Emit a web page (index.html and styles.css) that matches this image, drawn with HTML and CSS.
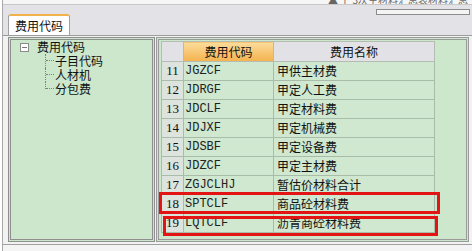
FILE: index.html
```html
<!DOCTYPE html>
<html lang="zh-CN">
<head>
    <meta charset="UTF-8">
    <meta name="viewport" content="width=device-width, initial-scale=1.0">
    <title>费用代码</title>
    <link rel="stylesheet" href="styles.css">
</head>
<body>

    <div class="window">
        <div class="topbar">
            <span class="topbar-text">▲ 上 3次主材料汇总表材料汇总</span>
        </div>
        <div class="tabbar">
            <div class="tab">费用代码</div>
            <div class="mini-scroll"></div>
        </div>

        <div class="content">
            <div class="tree-panel">
                <div class="tree-root">
                    <span class="minus-box"></span>
                    <span class="node-text">费用代码</span>
                </div>
                <div class="tree-children">
                    <div class="child"><span class="elbow"><span class="elbow-h"></span></span><span class="node-text">子目代码</span></div>
                    <div class="child"><span class="elbow"><span class="elbow-h"></span></span><span class="node-text">人材机</span></div>
                    <div class="child last"><span class="elbow"><span class="elbow-h"></span></span><span class="node-text">分包费</span></div>
                </div>
            </div>

            <div class="grid-panel">
                <table class="grid">
                    <colgroup>
                        <col class="col-num">
                        <col class="col-code">
                        <col class="col-name">
                    </colgroup>
                    <thead>
                        <tr>
                            <th class="num"></th>
                            <th class="code-head">费用代码</th>
                            <th>费用名称</th>
                        </tr>
                    </thead>
                    <tbody>
                        <tr><td class="num">11</td><td class="code">JGZCF</td><td>甲供主材费</td></tr>
                        <tr><td class="num">12</td><td class="code">JDRGF</td><td>甲定人工费</td></tr>
                        <tr><td class="num">13</td><td class="code">JDCLF</td><td>甲定材料费</td></tr>
                        <tr><td class="num">14</td><td class="code">JDJXF</td><td>甲定机械费</td></tr>
                        <tr><td class="num">15</td><td class="code">JDSBF</td><td>甲定设备费</td></tr>
                        <tr><td class="num">16</td><td class="code">JDZCF</td><td>甲定主材费</td></tr>
                        <tr><td class="num">17</td><td class="code">ZGJCLHJ</td><td>暂估价材料合计</td></tr>
                        <tr><td class="num">18</td><td class="code">SPTCLF</td><td>商品砼材料费</td></tr>
                        <tr><td class="num">19</td><td class="code">LQTCLF</td><td>沥青商砼材料费</td></tr>
                    </tbody>
                </table>
                <div class="mark mark-18"></div>
                <div class="mark mark-19"></div>
            </div>
        </div>
        <div class="bottombar"></div>
    </div>

</body>
</html>
```

FILE: styles.css
```css
body {
    margin: 0;
    background-color: #ffffff;
    font-family: "Noto Sans CJK SC", "Noto Sans", sans-serif;
    font-size: 12px;
    color: #111;
}
.window {
    margin-left: 2px;
    border-left: 1px solid #a8a8a8;
    height: 251px;
    box-sizing: border-box;
}
.topbar {
    height: 5px;
    border-bottom: 1px solid #c8c8c8;
    box-sizing: border-box;
    overflow: hidden;
    text-align: right;
    background-color: #f6f6f6;
}
.topbar-text {
    display: inline-block;
    font-size: 10px;
    line-height: 10px;
    margin-top: -5px;
    margin-right: 4px;
    color: #666;
    vertical-align: top;
}
.tabbar {
    height: 30px;
    background-color: #e3e3e7;
    display: flex;
    align-items: flex-end;
    justify-content: space-between;
    padding-left: 5px;
    padding-right: 2px;
}
.tab {
    width: 62px;
    height: 21px;
    box-sizing: border-box;
    background-color: #ffffff;
    border: 1px solid #a0a0a0;
    border-top: 2px solid #f0b24c;
    border-bottom: none;
    border-radius: 3px 3px 0 0;
    text-align: center;
    line-height: 19px;
    font-size: 12px;
}
.mini-scroll {
    align-self: flex-start;
    margin-top: 4px;
    width: 92px;
    height: 4px;
    border: 1px solid #8c8c8c;
    background-color: #f4f4f4;
}
.content {
    display: flex;
    gap: 1px;
    height: 209px;
    box-sizing: border-box;
    border-top: 1px solid #9c9c9c;
    padding: 1px 3px 2px 5px;
    background-color: #f2f2f2;
}
.tree-panel {
    width: 147px;
    box-sizing: border-box;
    border: 3px double #8e8e8e;
    background-color: #cce7cc;
}
.tree-root {
    display: flex;
    align-items: center;
    height: 14px;
}
.minus-box {
    width: 9px;
    height: 9px;
    box-sizing: border-box;
    margin-left: 9px;
    border: 1px solid #8a8a8a;
    background: linear-gradient(#7a7a7a, #7a7a7a) center / 5px 1px no-repeat, #ffffff;
}
.node-text {
    line-height: 14px;
    white-space: nowrap;
}
.tree-root .node-text {
    margin-left: 8px;
}
.tree-children {
    margin-left: 34px;
}
.child {
    display: flex;
    height: 14px;
}
.elbow {
    width: 9px;
    height: 14px;
    box-sizing: border-box;
    border-left: 1px dotted #808080;
    margin-right: 1px;
}
.child.last .elbow {
    height: 7px;
}
.elbow-h {
    display: block;
    height: 7px;
    box-sizing: border-box;
    border-bottom: 1px dotted #808080;
}
.grid-panel {
    flex: 1;
    position: relative;
    box-sizing: border-box;
    border: 3px double #9a9a9a;
    background-color: #cce7cc;
    padding: 1px 0 0 2px;
}
.grid {
    border-collapse: collapse;
    table-layout: fixed;
    width: 273px;
}
.col-num { width: 22px; }
.col-code { width: 90px; }
.col-name { width: 161px; }
.grid th {
    height: 19px;
    line-height: 17px;
    font-weight: normal;
    background-color: #e2e2e6;
    border: 1px solid #b4bcb4;
    padding: 0;
    text-align: center;
}
.grid th.code-head {
    background: linear-gradient(#fbdc9c, #f4b24e);
}
.grid td {
    height: 18px;
    line-height: 16px;
    padding: 0 0 0 3px;
    border: 1px solid #a9bba9;
    background-color: #cfe8cf;
    white-space: nowrap;
    overflow: hidden;
}
.grid td.num {
    background-color: #dde4dd;
    text-align: center;
    padding: 0;
    font-family: "Liberation Serif", serif;
    font-size: 13px;
}
.grid td.code {
    padding-left: 1px;
    font-family: "Liberation Mono", monospace;
    font-size: 12px;
    color: #222;
}
.mark {
    position: absolute;
    box-sizing: border-box;
    border: 3px solid #e21414;
}
.mark-18 {
    left: 0;
    top: 152px;
    width: 281px;
    height: 22px;
}
.mark-19 {
    left: 4px;
    top: 176px;
    width: 275px;
    height: 20px;
}
.bottombar {
    height: 6px;
    border-top: 1px solid #a0a0a0;
    background-color: #f4f4f4;
}
```
